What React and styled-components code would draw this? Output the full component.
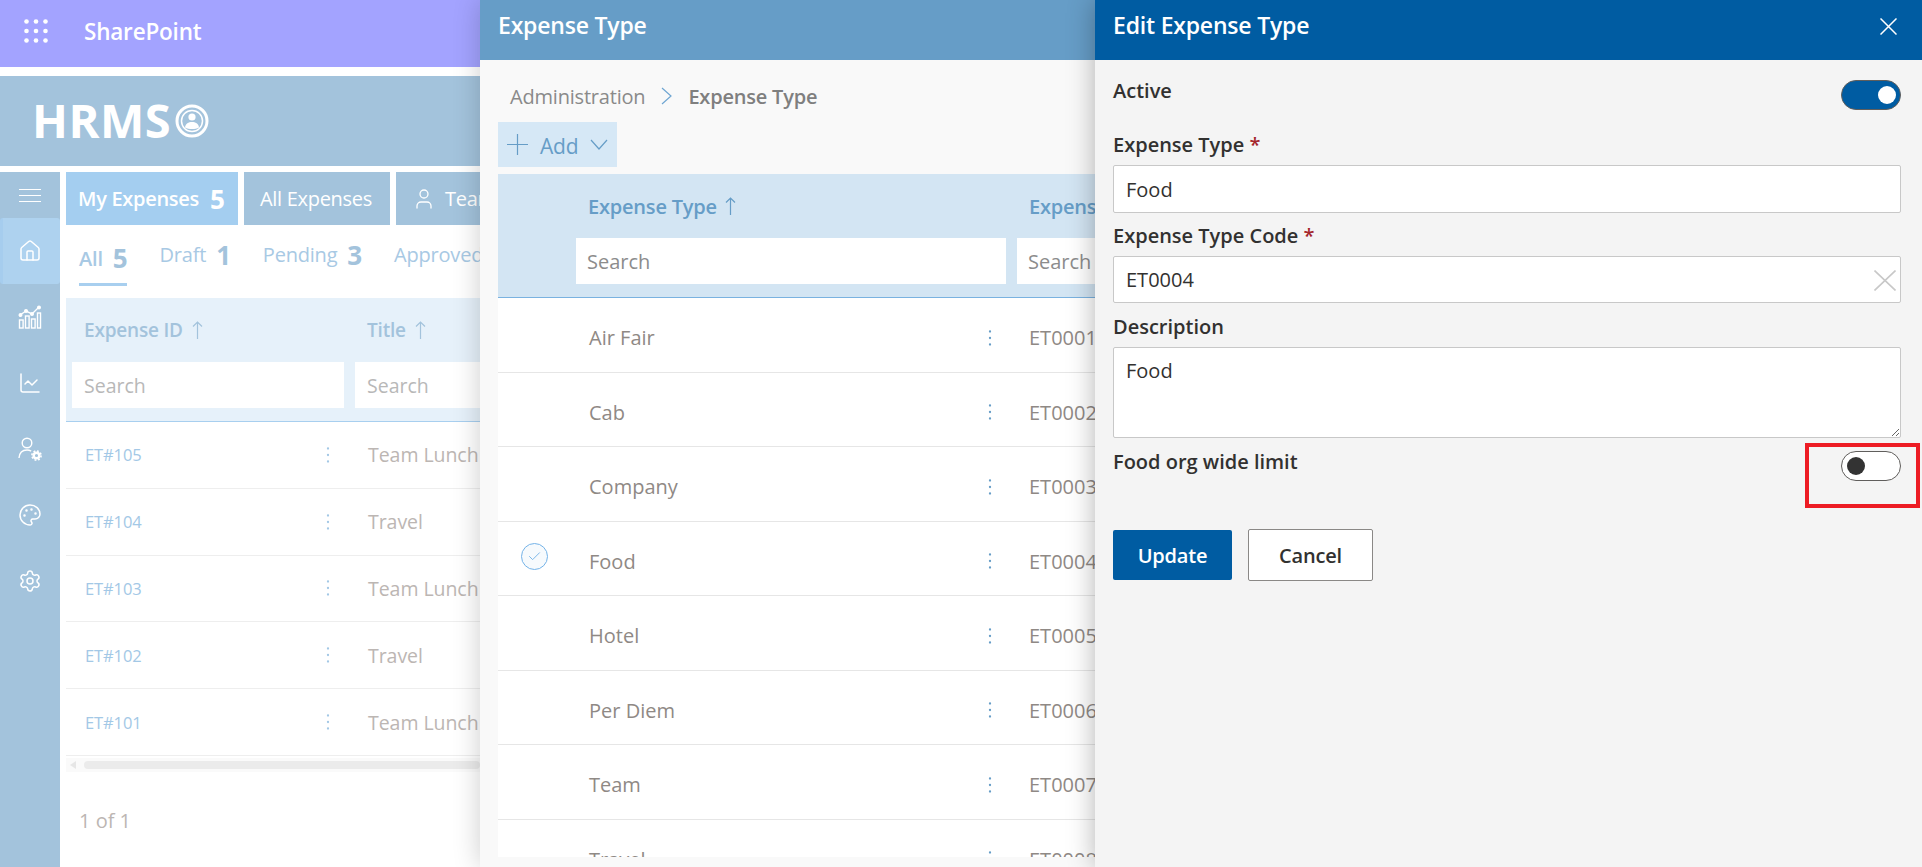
import React from "react";
import styled, { createGlobalStyle } from "styled-components";
import { House, ChartLine, Palette, Settings, User, Check } from "lucide-react";

const expenses = [
  { id: "ET#105", title: "Team Lunch" },
  { id: "ET#104", title: "Travel" },
  { id: "ET#103", title: "Team Lunch" },
  { id: "ET#102", title: "Travel" },
  { id: "ET#101", title: "Team Lunch" },
];

const types = [
  { name: "Air Fair", code: "ET0001" },
  { name: "Cab", code: "ET0002" },
  { name: "Company", code: "ET0003" },
  { name: "Food", code: "ET0004", selected: true },
  { name: "Hotel", code: "ET0005" },
  { name: "Per Diem", code: "ET0006" },
  { name: "Team", code: "ET0007" },
  { name: "Travel", code: "ET0008" },
];

function GridDots() {
  const spots = [0, 1, 2];
  return (
    <svg width="24" height="24" viewBox="0 0 24 24" fill="#fff">
      {spots.map((r) =>
        spots.map((c) => (
          <circle key={`${r}${c}`} cx={2.5 + c * 9.5} cy={2.5 + r * 9.5} r="2.3" />
        ))
      )}
    </svg>
  );
}

function Kebab({ color }) {
  return (
    <svg width="4" height="16" viewBox="0 0 4 16" fill={color}>
      <circle cx="2" cy="1.5" r="1.15" />
      <circle cx="2" cy="8" r="1.15" />
      <circle cx="2" cy="14.5" r="1.15" />
    </svg>
  );
}

// thin fabric style glyphs
function ThinArrow() {
  return (
    <svg width="11" height="18" viewBox="0 0 11 18" fill="none" stroke="currentColor" strokeWidth="1.2">
      <path d="M5.5 18V1M1 5.5L5.5 1l4.5 4.5" />
    </svg>
  );
}

function ThinChevronRight() {
  return (
    <svg width="11" height="18" viewBox="0 0 11 18" fill="none" stroke="#6fa6d2" strokeWidth="1.2">
      <path d="M1 1l9 8-9 8" />
    </svg>
  );
}

function ThinChevronDown() {
  return (
    <svg width="18" height="11" viewBox="0 0 18 11" fill="none" stroke="currentColor" strokeWidth="1.2">
      <path d="M1 1l8 9 8-9" />
    </svg>
  );
}

function ThinPlus() {
  return (
    <svg width="21" height="21" viewBox="0 0 21 21" fill="none" stroke="currentColor" strokeWidth="1.2">
      <path d="M10.5 0v21M0 10.5h21" />
    </svg>
  );
}

function ThinX({ w, h, color, sw }) {
  return (
    <svg width={w} height={h} viewBox={`0 0 ${w} ${h}`} fill="none" stroke={color} strokeWidth={sw}>
      <path d={`M0.5 0.5L${w - 0.5} ${h - 0.5}M${w - 0.5} 0.5L0.5 ${h - 0.5}`} />
    </svg>
  );
}

function BarsLine() {
  return (
    <svg width="24" height="24" viewBox="0 0 24 24" fill="none" stroke="#fff" strokeWidth="1.4">
      <rect x="1.5" y="15" width="3.6" height="8" />
      <rect x="7.5" y="11" width="3.6" height="12" />
      <rect x="13.5" y="14" width="3.6" height="9" />
      <rect x="19.5" y="8" width="3" height="15" />
      <path d="M2 10l6-4 6 3 7-7" />
      <circle cx="2.5" cy="10" r="1.3" fill="#fff" />
      <circle cx="8" cy="6" r="1.3" fill="#fff" />
      <circle cx="14" cy="9" r="1.3" fill="#fff" />
      <circle cx="21" cy="2.5" r="1.3" fill="#fff" />
    </svg>
  );
}

function UserGear() {
  return (
    <svg width="24" height="24" viewBox="0 0 24 24" fill="none" stroke="#fff" strokeWidth="1.4">
      <circle cx="9" cy="6" r="4.8" />
      <path d="M1 21c.4-5 3.6-8 8-8 1.6 0 3 .4 4.2 1.1" />
      <circle cx="18.5" cy="18.5" r="2.8" strokeWidth="2.4" />
      <circle cx="18.5" cy="18.5" r="4.6" strokeWidth="1.6" strokeDasharray="1.9 1.7" />
    </svg>
  );
}

function LogoBadge() {
  return (
    <svg width="34" height="34" viewBox="0 0 34 34" fill="none">
      <circle cx="17" cy="17" r="15" stroke="#fff" strokeWidth="3" />
      <circle cx="17" cy="17" r="10.5" stroke="#fff" strokeWidth="1.5" />
      <circle cx="17" cy="13" r="3.6" fill="#fff" />
      <path d="M10 23.5c.5-4 3.5-5.5 7-5.5s6.5 1.5 7 5.5c-2 1.2-4.5 1.5-7 1.5s-5-.3-7-1.5z" fill="#fff" />
    </svg>
  );
}

function Toggle({ on }) {
  return (
    <Track $on={on}>
      <Thumb $on={on} />
    </Track>
  );
}

export default function App() {
  return (
    <>
      <GlobalStyle />
      <Page>
        <BaseColumn>
          <SuiteBar>
            <GridDots />
            <SuiteName>SharePoint</SuiteName>
          </SuiteBar>
          <Banner>
            <LogoText>HRMS</LogoText>
            <LogoBadge />
          </Banner>
          <Main>
            <Sidebar>
              <Burger>
                <span />
                <span />
                <span />
              </Burger>
              <NavItem $active>
                <House size={24} strokeWidth={1.5} />
              </NavItem>
              <NavItem>
                <BarsLine />
              </NavItem>
              <NavItem>
                <ChartLine size={24} strokeWidth={1.5} />
              </NavItem>
              <NavItem>
                <UserGear />
              </NavItem>
              <NavItem>
                <Palette size={24} strokeWidth={1.5} />
              </NavItem>
              <NavItem>
                <Settings size={24} strokeWidth={1.5} />
              </NavItem>
            </Sidebar>
            <Content>
              <Tabs>
                <Tab $active $w={172}>
                  My Expenses <TabCount>5</TabCount>
                </Tab>
                <Tab $w={146}>All Expenses</Tab>
                <Tab>
                  <User size={24} strokeWidth={1.3} />
                  Team Expenses
                </Tab>
              </Tabs>
              <Pivot>
                <PivotItem $active>
                  All <PivotCount>5</PivotCount>
                </PivotItem>
                <PivotItem>
                  Draft <PivotCount>1</PivotCount>
                </PivotItem>
                <PivotItem>
                  Pending <PivotCount>3</PivotCount>
                </PivotItem>
                <PivotItem>Approved</PivotItem>
              </Pivot>
              <BaseHead>
                <BaseHeadCell>
                  <BaseHeadTitle>
                    Expense ID <ThinArrow />
                  </BaseHeadTitle>
                  <BaseSearch placeholder="Search" readOnly />
                </BaseHeadCell>
                <BaseHeadCell>
                  <BaseHeadTitle>
                    Title <ThinArrow />
                  </BaseHeadTitle>
                  <BaseSearch placeholder="Search" readOnly />
                </BaseHeadCell>
              </BaseHead>
              {expenses.map((e) => (
                <BaseRow key={e.id}>
                  <BaseId>
                    {e.id}
                    <Kebab color="#a3c8e6" />
                  </BaseId>
                  <BaseTitle>{e.title}</BaseTitle>
                </BaseRow>
              ))}
              <ScrollTrack>
                <ScrollArrow />
                <ScrollThumb />
              </ScrollTrack>
              <Pager>1 of 1</Pager>
            </Content>
          </Main>
        </BaseColumn>

        <ListPanel>
          <PanelHead $bg="#669dc7">
            <PanelTitle>Expense Type</PanelTitle>
          </PanelHead>
          <Crumbs>
            <CrumbLink>Administration</CrumbLink>
            <ThinChevronRight />
            <CrumbCurrent>Expense Type</CrumbCurrent>
          </Crumbs>
          <AddButton>
            <ThinPlus />
            <span>Add</span>
            <ThinChevronDown />
          </AddButton>
          <TypeTable>
            <TypeHead>
              <div />
              <TypeHeadCell>
                <TypeHeadTitle>
                  Expense Type <ThinArrow />
                </TypeHeadTitle>
                <TypeSearch placeholder="Search" readOnly />
              </TypeHeadCell>
              <TypeHeadCell>
                <TypeHeadTitle>Expense Type Code</TypeHeadTitle>
                <TypeSearch placeholder="Search" readOnly />
              </TypeHeadCell>
            </TypeHead>
            {types.map((t) => (
              <TypeRow key={t.code}>
                <CheckCell>
                  {t.selected && (
                    <CheckCircle>
                      <Check size={15} strokeWidth={1.5} />
                    </CheckCircle>
                  )}
                </CheckCell>
                <TypeName>
                  {t.name}
                  <Kebab color="#669dc7" />
                </TypeName>
                <TypeCode>{t.code}</TypeCode>
              </TypeRow>
            ))}
          </TypeTable>
        </ListPanel>

        <EditPanel>
          <PanelHead $bg="#005ca2">
            <PanelTitle>Edit Expense Type</PanelTitle>
            <ThinX w={17} h={17} color="#fff" sw={1.5} />
          </PanelHead>
          <Form>
            <ToggleRow>
              <Label>Active</Label>
              <Toggle on />
            </ToggleRow>
            <Field $top={23}>
              <FieldLabel>
                Expense Type <Req>*</Req>
              </FieldLabel>
              <TextBox defaultValue="Food" readOnly $h={48} />
            </Field>
            <Field $top={11}>
              <FieldLabel>
                Expense Type Code <Req>*</Req>
              </FieldLabel>
              <BoxWrap>
                <TextBox defaultValue="ET0004" readOnly $h={47} />
                <ClearIcon>
                  <ThinX w={22} h={21} color="#c8c8c8" sw={1.6} />
                </ClearIcon>
              </BoxWrap>
            </Field>
            <Field $top={12}>
              <FieldLabel>Description</FieldLabel>
              <TextArea defaultValue="Food" readOnly />
            </Field>
            <ToggleRow $top={13}>
              <Label>Food org wide limit</Label>
              <ToggleSpot>
                <Toggle />
                <Highlight />
              </ToggleSpot>
            </ToggleRow>
            <Buttons>
              <PrimaryButton>Update</PrimaryButton>
              <GhostButton>Cancel</GhostButton>
            </Buttons>
          </Form>
        </EditPanel>
      </Page>
    </>
  );
}

const GlobalStyle = createGlobalStyle`
  html, body {
    margin: 0;
    height: 100%;
    overflow: hidden;
    background: #fff;
  }
  * {
    box-sizing: border-box;
  }
  body, input, textarea, button {
    font-family: "Open Sans", "Noto Sans", sans-serif;
  }
`;

const Page = styled.div`
  display: flex;
  width: 1922px;
  height: 867px;
  overflow: hidden;
`;

const BaseColumn = styled.div`
  width: 480px;
  flex: none;
  display: flex;
  flex-direction: column;
  overflow: hidden;
`;

const SuiteBar = styled.div`
  height: 67px;
  flex: none;
  background: #a3a3ff;
  display: flex;
  align-items: center;
  padding: 0 0 5px 24px;
  gap: 36px;
`;

const SuiteName = styled.span`
  color: #fff;
  font-size: 22.5px;
  font-weight: 600;
  letter-spacing: -0.2px;
`;

const Banner = styled.div`
  height: 90px;
  flex: none;
  margin-top: 9px;
  background: #a3c3dc;
  display: flex;
  align-items: center;
  padding-left: 32px;
  gap: 4px;
`;

const LogoText = styled.span`
  color: #fff;
  font-size: 47px;
  font-weight: 700;
  letter-spacing: 0.5px;
  margin-top: -3px;
`;

const Main = styled.div`
  flex: 1;
  margin-top: 6px;
  display: flex;
  min-height: 0;
`;

const Sidebar = styled.nav`
  width: 60px;
  flex: none;
  background: #a3c3dc;
  display: flex;
  flex-direction: column;
  color: #fff;
`;

const Burger = styled.div`
  height: 46px;
  display: flex;
  flex-direction: column;
  justify-content: center;
  align-items: center;
  gap: 5px;
  span {
    width: 22px;
    height: 1px;
    background: #fff;
  }
`;

const NavItem = styled.div`
  height: 66px;
  flex: none;
  display: flex;
  align-items: center;
  justify-content: center;
  border-radius: 3px;
  background: ${(p) => (p.$active ? "#aed2ef" : "transparent")};
  border-left: ${(p) => (p.$active ? "3px solid #a6cdee" : "0")};
  padding-right: ${(p) => (p.$active ? "3px" : "0")};
`;

const Content = styled.div`
  flex: 1;
  min-width: 0;
  margin-left: 6px;
  display: flex;
  flex-direction: column;
`;

const Tabs = styled.div`
  display: flex;
  gap: 6px;
  height: 53px;
  flex: none;
`;

const Tab = styled.div`
  flex: none;
  width: ${(p) => (p.$w ? `${p.$w}px` : "auto")};
  display: flex;
  align-items: center;
  gap: 9px;
  padding: 0 0 0 ${(p) => (p.$active ? 12 : 16)}px;
  background: ${(p) => (p.$active ? "#a4cef0" : "#a3c3dc")};
  color: #fff;
  font-size: 20px;
  font-weight: ${(p) => (p.$active ? 600 : 400)};
  white-space: nowrap;
  letter-spacing: -0.3px;
`;

const TabCount = styled.span`
  font-size: 26px;
  font-weight: 700;
  margin-left: 2px;
`;

const Pivot = styled.div`
  height: 73px;
  flex: none;
  display: flex;
  padding-left: 13px;
  gap: 32px;
  white-space: nowrap;
`;

const PivotItem = styled.div`
  height: 61px;
  display: flex;
  align-items: center;
  gap: 10px;
  padding-top: ${(p) => (p.$active ? "8px" : "1px")};
  color: #a8c9e4;
  font-size: 20px;
  font-weight: ${(p) => (p.$active ? 600 : 400)};
  border-bottom: ${(p) => (p.$active ? "3px solid #a8cfef" : "3px solid transparent")};
  letter-spacing: -0.2px;
`;

const PivotCount = styled.span`
  font-size: 26px;
  font-weight: 700;
  color: #a3c3dc;
`;

const BaseHead = styled.div`
  height: 124px;
  flex: none;
  background: #e6f1fa;
  border-bottom: 1px solid #a8cfef;
  display: grid;
  grid-template-columns: 272px 1fr;
  gap: 11px;
  padding-left: 6px;
`;

const BaseHeadCell = styled.div`
  display: flex;
  flex-direction: column;
  min-width: 0;
`;

const BaseHeadTitle = styled.div`
  height: 64px;
  display: flex;
  align-items: center;
  gap: 9px;
  padding-left: 12px;
  color: #a3c3dc;
  font-size: 19px;
  font-weight: 600;
  letter-spacing: -0.2px;
`;

const BaseSearch = styled.input`
  height: 46px;
  width: 100%;
  border: 0;
  padding: 0 12px;
  font-size: 19.5px;
  background: #fff;
  outline: none;
  &::placeholder {
    color: #b8b8b8;
  }
`;

const BaseRow = styled.div`
  height: 66.8px;
  flex: none;
  display: grid;
  grid-template-columns: 302px 1fr;
  align-items: center;
  border-bottom: 1px solid #eee;
`;

const BaseId = styled.div`
  display: flex;
  align-items: center;
  justify-content: space-between;
  padding: 0 38px 0 19px;
  color: #a3c8e6;
  font-size: 16.5px;
  letter-spacing: -0.1px;
`;

const BaseTitle = styled.div`
  color: #bcb6b3;
  font-size: 19.5px;
  white-space: nowrap;
  letter-spacing: -0.05px;
`;

const ScrollTrack = styled.div`
  height: 14px;
  flex: none;
  margin-top: 2px;
  display: flex;
  align-items: center;
  padding-left: 4px;
  background: #fafafa;
`;

const ScrollArrow = styled.div`
  width: 0;
  height: 0;
  border-top: 4px solid transparent;
  border-bottom: 4px solid transparent;
  border-right: 6px solid #e6e6e6;
`;

const ScrollThumb = styled.div`
  flex: 1;
  height: 8px;
  margin-left: 8px;
  background: #ebebeb;
  border-radius: 4px;
`;

const Pager = styled.div`
  margin-top: 35px;
  padding-left: 13px;
  color: #bcb6b3;
  font-size: 20px;
`;

const ListPanel = styled.section`
  width: 615px;
  flex: none;
  position: relative;
  z-index: 1;
  background: #f9f9f9;
  box-shadow: 0 0 26px rgba(0, 0, 0, 0.2);
  overflow: hidden;
  display: flex;
  flex-direction: column;
`;

const EditPanel = styled.section`
  flex: 1;
  position: relative;
  z-index: 2;
  background: #f4f4f4;
  box-shadow: 0 0 26px rgba(0, 0, 0, 0.3);
  overflow: hidden;
`;

const PanelHead = styled.header`
  height: 60px;
  flex: none;
  background: ${(p) => p.$bg};
  display: flex;
  align-items: center;
  justify-content: space-between;
  padding: 0 25px 8px 18px;
`;

const PanelTitle = styled.h2`
  margin: -2px 0 0;
  color: #fff;
  font-size: 23px;
  font-weight: 600;
  letter-spacing: -0.2px;
`;

const Crumbs = styled.div`
  height: 62px;
  flex: none;
  display: flex;
  align-items: center;
  gap: 16px;
  padding: 10px 0 0 30px;
  font-size: 20px;
  letter-spacing: -0.2px;
`;

const CrumbLink = styled.span`
  color: #8a8a8a;
`;

const CrumbCurrent = styled.span`
  color: #7f7f7f;
  font-weight: 600;
`;

const AddButton = styled.button`
  width: 119px;
  height: 45px;
  flex: none;
  margin-left: 18px;
  padding: 0 0 0 9px;
  border: 0;
  background: #d6e8f6;
  color: #669dc7;
  display: flex;
  align-items: center;
  gap: 12px;
  font-size: 21px;
  letter-spacing: -0.2px;
  span {
    padding-top: 3px;
  }
`;

const TypeTable = styled.div`
  height: 683px;
  flex: none;
  margin: 7px 0 0 18px;
  background: #fff;
  overflow: hidden;
`;

const TypeHead = styled.div`
  height: 124px;
  background: #d3e5f3;
  border-bottom: 1px solid #7ab2e0;
  display: grid;
  grid-template-columns: 78px 430px 240px;
  column-gap: 0;
  & > *:last-child {
    margin-left: 11px;
  }
`;

const TypeHeadCell = styled.div`
  display: flex;
  flex-direction: column;
  min-width: 0;
`;

const TypeHeadTitle = styled.div`
  height: 64px;
  display: flex;
  align-items: center;
  gap: 8px;
  padding-left: 12px;
  color: #669dc7;
  font-size: 20px;
  font-weight: 600;
  white-space: nowrap;
  letter-spacing: -0.2px;
`;

const TypeSearch = styled.input`
  height: 46px;
  width: 100%;
  border: 0;
  padding: 0 11px;
  font-size: 20px;
  background: #fff;
  outline: none;
  &::placeholder {
    color: #8c8c8c;
  }
`;

const TypeRow = styled.div`
  height: 74.5px;
  display: grid;
  grid-template-columns: 91px 440px 1fr;
  align-items: center;
  border-bottom: 1px solid #e6e6e6;
`;

const CheckCell = styled.div`
  display: flex;
  justify-content: center;
  padding: 0 18px 0 0;
  margin-top: -3px;
`;

const CheckCircle = styled.div`
  width: 27px;
  height: 27px;
  border-radius: 50%;
  border: 1.5px solid #74b3e8;
  background: #f6fafd;
  color: #74b3e8;
  display: flex;
  align-items: center;
  justify-content: center;
`;

const TypeName = styled.div`
  display: flex;
  align-items: center;
  justify-content: space-between;
  padding: 6px 37px 0 0;
  color: #8f8985;
  font-size: 20px;
`;

const TypeCode = styled.div`
  padding-top: 6px;
  color: #8f8985;
  font-size: 20px;
`;

const Form = styled.div`
  padding: 20px 21px 0 18px;
`;

const ToggleRow = styled.div`
  display: flex;
  justify-content: space-between;
  height: 30px;
  margin-top: ${(p) => p.$top || 0}px;
`;

const Label = styled.label`
  color: #323130;
  font-size: 20px;
  line-height: 24px;
  font-weight: 600;
  margin-top: -1px;
`;

const Track = styled.div`
  width: 60px;
  height: 30px;
  border-radius: 15px;
  display: flex;
  align-items: center;
  padding: 0 ${(p) => (p.$on ? 4 : 5)}px;
  justify-content: ${(p) => (p.$on ? "flex-end" : "flex-start")};
  background: ${(p) => (p.$on ? "#005ca2" : "#fff")};
  border: 1px solid #605e5c;
`;

const Thumb = styled.div`
  width: 18px;
  height: 18px;
  border-radius: 50%;
  background: ${(p) => (p.$on ? "#fff" : "#333")};
`;

const ToggleSpot = styled.div`
  position: relative;
`;

const Highlight = styled.div`
  position: absolute;
  left: -36px;
  top: -8px;
  width: 115px;
  height: 65px;
  border: 4px solid #ed1c24;
`;

const Field = styled.div`
  margin-top: ${(p) => p.$top}px;
`;

const FieldLabel = styled.label`
  display: block;
  height: 24px;
  margin-bottom: 8px;
  color: #323130;
  font-size: 20px;
  line-height: 24px;
  font-weight: 600;
`;

const Req = styled.span`
  color: #a4262c;
`;

const TextBox = styled.input`
  display: block;
  width: 100%;
  height: ${(p) => p.$h}px;
  padding: 0 12px;
  border: 1px solid #c8c8c8;
  border-radius: 2px;
  background: #fff;
  color: #323130;
  font-size: 20px;
  outline: none;
`;

const BoxWrap = styled.div`
  position: relative;
`;

const ClearIcon = styled.span`
  position: absolute;
  right: 5px;
  top: 14px;
  display: flex;
`;

const TextArea = styled.textarea`
  display: block;
  width: 100%;
  height: 91px;
  padding: 9px 12px;
  border: 1px solid #c8c8c8;
  border-radius: 2px;
  background: #fff;
  color: #323130;
  font-size: 20px;
  outline: none;
`;

const Buttons = styled.div`
  display: flex;
  align-items: center;
  gap: 16px;
  margin-top: 48px;
`;

const PrimaryButton = styled.button`
  width: 119px;
  height: 50px;
  border: 0;
  border-radius: 2px;
  background: #005ca2;
  color: #fff;
  font-size: 20px;
  font-weight: 600;
  letter-spacing: -0.2px;
`;

const GhostButton = styled.button`
  width: 125px;
  height: 52px;
  border: 1px solid #8a8886;
  border-radius: 2px;
  background: #fff;
  color: #323130;
  font-size: 20px;
  font-weight: 600;
  letter-spacing: -0.2px;
`;
